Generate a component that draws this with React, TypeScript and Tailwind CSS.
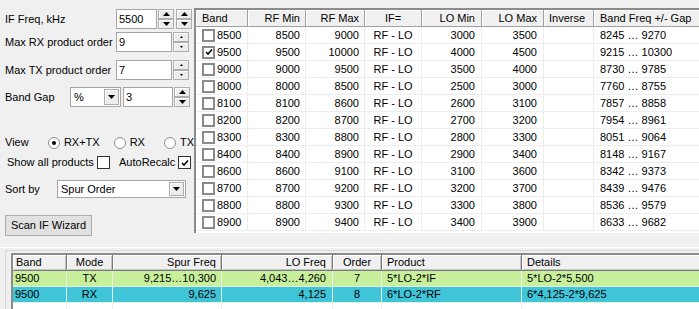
import type { ReactNode } from 'react'

const bands = [
  { band: '8500', min: '8500', max: '9000', lo1: '3000', lo2: '3500', freq: '8245 … 9270', on: false },
  { band: '9500', min: '9500', max: '10000', lo1: '4000', lo2: '4500', freq: '9215 … 10300', on: true },
  { band: '9000', min: '9000', max: '9500', lo1: '3500', lo2: '4000', freq: '8730 … 9785', on: false },
  { band: '8000', min: '8000', max: '8500', lo1: '2500', lo2: '3000', freq: '7760 … 8755', on: false },
  { band: '8100', min: '8100', max: '8600', lo1: '2600', lo2: '3100', freq: '7857 … 8858', on: false },
  { band: '8200', min: '8200', max: '8700', lo1: '2700', lo2: '3200', freq: '7954 … 8961', on: false },
  { band: '8300', min: '8300', max: '8800', lo1: '2800', lo2: '3300', freq: '8051 … 9064', on: false },
  { band: '8400', min: '8400', max: '8900', lo1: '2900', lo2: '3400', freq: '8148 … 9167', on: false },
  { band: '8600', min: '8600', max: '9100', lo1: '3100', lo2: '3600', freq: '8342 … 9373', on: false },
  { band: '8700', min: '8700', max: '9200', lo1: '3200', lo2: '3700', freq: '8439 … 9476', on: false },
  { band: '8800', min: '8800', max: '9300', lo1: '3300', lo2: '3800', freq: '8536 … 9579', on: false },
  { band: '8900', min: '8900', max: '9400', lo1: '3400', lo2: '3900', freq: '8633 … 9682', on: false },
]

const spurs = [
  { band: '9500', mode: 'TX', spur: '9,215…10,300', lo: '4,043…4,260', order: '7', product: '5*LO-2*IF', details: '5*LO-2*5,500', bg: 'bg-[#c8f09c]' },
  { band: '9500', mode: 'RX', spur: '9,625', lo: '4,125', order: '8', product: '6*LO-2*RF', details: '6*4,125-2*9,625', bg: 'bg-[#40c4d8]' },
]

function Arrow({ dir, size }: { dir: 'up' | 'down'; size: 'sm' | 'lg' }) {
  const w = size === 'lg' ? 7 : 3
  const h = size === 'lg' ? 4 : 2
  const pts = dir === 'up' ? `0,${h} ${w / 2},0 ${w},${h}` : `0,0 ${w / 2},${h} ${w},0`
  return (
    <svg width={w} height={h} viewBox={`0 0 ${w} ${h}`} className="block">
      <polygon points={pts} fill="#000" />
    </svg>
  )
}

function SpinBtn({ dir, size }: { dir: 'up' | 'down'; size: 'sm' | 'lg' }) {
  return (
    <div className="flex flex-1 items-center justify-center border border-[#adadad] bg-[#ececec] shadow-[inset_1px_1px_0_#fff]">
      <Arrow dir={dir} size={size} />
    </div>
  )
}

function Spin({ size = 'sm' }: { size?: 'sm' | 'lg' }) {
  return (
    <div className="flex h-full w-[16px] flex-col">
      <SpinBtn dir="up" size={size} />
      <SpinBtn dir="down" size={size} />
    </div>
  )
}

function Edit({ value, w }: { value: string; w: string }) {
  return (
    <div className={`flex h-full items-center border border-[#a5a5a5] bg-white pl-[2px] ${w}`}>{value}</div>
  )
}

function Combo({ value, w }: { value: string; w: string }) {
  return (
    <div className={`flex h-full items-center border border-[#a5a5a5] bg-white pl-[3px] ${w}`}>
      <span className="flex-1">{value}</span>
      <div className="mr-[1px] flex h-[calc(100%-2px)] w-[15px] items-center justify-center border border-[#adadad] bg-[#ececec] shadow-[inset_1px_1px_0_#fff]">
        <Arrow dir="down" size="lg" />
      </div>
    </div>
  )
}

function Box({ checked, grid }: { checked: boolean; grid?: boolean }) {
  return (
    <div
      className={`flex h-[13px] w-[13px] shrink-0 items-center justify-center bg-white ${
        grid ? 'border-2 border-[#8a8a8a]' : 'border border-[#333]'
      }`}
    >
      {checked ? (
        <svg width="8" height="8" viewBox="0 0 8 8">
          <path d="M1 4 L3 6 L7 1.5" stroke="#000" strokeWidth="1.6" fill="none" />
        </svg>
      ) : null}
    </div>
  )
}

function Radio({ on, label }: { on: boolean; label: string }) {
  return (
    <div className="flex items-center gap-[4px]">
      <div className="flex h-[12px] w-[12px] items-center justify-center rounded-full border border-[#8f8f8f] bg-white">
        {on ? <div className="h-[4px] w-[4px] rounded-full bg-black" /> : null}
      </div>
      <span>{label}</span>
    </div>
  )
}

function LeftPanel() {
  return (
    <div className="flex w-[194px] shrink-0 flex-col pl-[5px] pt-[9px]">
      <div className="flex h-[20px] items-center">
        <span className="w-[111px]">IF Freq, kHz</span>
        <Edit value="5500" w="w-[41px]" />
        <div className="ml-[1px] flex h-full gap-[2px]">
          <Spin size="lg" />
          <Spin size="lg" />
        </div>
      </div>
      <div className="mt-[3px] flex h-[20px] items-center">
        <span className="w-[111px]">Max RX product order</span>
        <Edit value="9" w="w-[56px]" />
        <div className="ml-[1px] h-full">
          <Spin />
        </div>
      </div>
      <div className="mt-[8px] flex h-[20px] items-center">
        <span className="w-[111px]">Max TX product order</span>
        <Edit value="7" w="w-[56px]" />
        <div className="ml-[1px] h-full">
          <Spin />
        </div>
      </div>
      <div className="mt-[7px] flex h-[20px] items-center">
        <span className="w-[65px]">Band Gap</span>
        <Combo value="%" w="w-[51px]" />
        <div className="ml-[2px] flex h-full">
          <Edit value="3" w="w-[50px]" />
        </div>
        <div className="ml-[1px] h-full">
          <Spin size="lg" />
        </div>
      </div>
      <div className="mt-[29px] flex h-[13px] items-center">
        <span className="w-[47px]">View</span>
        <Radio on label="RX+TX" />
        <div className="ml-[14px]">
          <Radio on={false} label="RX" />
        </div>
        <div className="ml-[19px]">
          <Radio on={false} label="TX" />
        </div>
      </div>
      <div className="mt-[7px] flex h-[13px] items-center pl-[2px]">
        <span className="w-[90px]">Show all products</span>
        <Box checked={false} />
        <span className="ml-[9px] w-[59px]">AutoRecalc</span>
        <Box checked />
      </div>
      <div className="mt-[11px] flex h-[18px] items-center">
        <span className="w-[52px]">Sort by</span>
        <Combo value="Spur Order" w="w-[129px]" />
      </div>
      <div className="mt-[17px] flex h-[21px] w-[87px] items-center justify-center border border-[#adadad] bg-[#e1e1e1]">
        Scan IF Wizard
      </div>
    </div>
  )
}

const topCols = [
  { label: 'Band', w: 'w-[52px]', align: 'justify-start pl-[6px]' },
  { label: 'RF Min', w: 'w-[58px]', align: 'justify-end pr-[5px]' },
  { label: 'RF Max', w: 'w-[59px]', align: 'justify-end pr-[5px]' },
  { label: 'IF=', w: 'w-[57px]', align: 'justify-center' },
  { label: 'LO Min', w: 'w-[60px]', align: 'justify-end pr-[6px]' },
  { label: 'LO Max', w: 'w-[62px]', align: 'justify-end pr-[6px]' },
  { label: 'Inverse', w: 'w-[50px]', align: 'justify-start pl-[5px]' },
  { label: 'Band Freq +/- Gap', w: 'w-[110px]', align: 'justify-start pl-[6px]' },
]

function BandGrid() {
  return (
    <div className="mt-[8px] h-[225px] overflow-hidden border-l-2 border-t-2 border-l-[#8c8c8c] border-t-[#8c8c8c] bg-white">
      <div className="flex h-[17px]">
        {topCols.map((c) => (
          <div
            key={c.label}
            className={`flex shrink-0 items-center whitespace-nowrap border-b border-r border-[#a0a0a0] bg-[#f0f0f0] shadow-[inset_1px_1px_0_#fff] ${c.w} ${c.align}`}
          >
            {c.label}
          </div>
        ))}
      </div>
      {bands.map((b) => {
        const cells: ReactNode[] = [
          <>
            <Box checked={b.on} grid />
            <span className="ml-[2px]">{b.band}</span>
          </>,
          b.min,
          b.max,
          'RF - LO',
          b.lo1,
          b.lo2,
          '',
          b.freq,
        ]
        return (
          <div key={b.band} className="flex h-[17px]">
            {cells.map((v, i) => (
              <div
                key={i}
                className={`flex shrink-0 items-center whitespace-nowrap border-b border-r border-[#ededed] ${topCols[i].w} ${
                  i === 0 ? 'pl-[6px]' : topCols[i].align
                }`}
              >
                {v}
              </div>
            ))}
          </div>
        )
      })}
    </div>
  )
}

const bottomCols = [
  { label: 'Band', w: 'w-[54px]', head: 'justify-start pl-[3px]', cell: 'justify-start pl-[2px]' },
  { label: 'Mode', w: 'w-[46px]', head: 'justify-center', cell: 'justify-center' },
  { label: 'Spur Freq', w: 'w-[109px]', head: 'justify-end pr-[5px]', cell: 'justify-end pr-[5px]' },
  { label: 'LO Freq', w: 'w-[111px]', head: 'justify-end pr-[6px]', cell: 'justify-end pr-[6px]' },
  { label: 'Order', w: 'w-[49px]', head: 'justify-center', cell: 'justify-center' },
  { label: 'Product', w: 'w-[140px]', head: 'justify-start pl-[5px]', cell: 'justify-start pl-[5px]' },
  { label: 'Details', w: 'w-[200px]', head: 'justify-start pl-[5px]', cell: 'justify-start pl-[5px]' },
]

function SpurGrid() {
  return (
    <div className="h-[56px] overflow-hidden border-l-2 border-t-2 border-l-[#8c8c8c] border-t-[#8c8c8c] bg-white">
      <div className="flex h-[16px]">
        {bottomCols.map((c) => (
          <div
            key={c.label}
            className={`flex shrink-0 items-center border-b border-r border-[#7a7a7a] bg-[#f0f0f0] shadow-[inset_1px_1px_0_#fff,inset_-1px_-1px_0_#c4c4c4] ${c.w} ${c.head}`}
          >
            {c.label}
          </div>
        ))}
      </div>
      {spurs.map((s) => {
        const vals = [s.band, s.mode, s.spur, s.lo, s.order, s.product, s.details]
        return (
          <div key={s.mode} className={`flex h-[16px] ${s.bg}`}>
            {vals.map((v, i) => (
              <div
                key={i}
                className={`flex shrink-0 items-center whitespace-nowrap border-b border-r border-[#e6f2e0] ${bottomCols[i].w} ${bottomCols[i].cell}`}
              >
                {v}
              </div>
            ))}
          </div>
        )
      })}
      <div className="flex h-[8px]">
        {bottomCols.map((c) => (
          <div key={c.label} className={`shrink-0 border-r border-[#ededed] ${c.w}`} />
        ))}
      </div>
    </div>
  )
}

export default function App() {
  return (
    <div className="h-[309px] w-[699px] overflow-hidden bg-[#f0f0f0] font-['Liberation_Sans',Arial,sans-serif] text-[11px] leading-none text-black">
      <div className="flex h-[240px]">
        <LeftPanel />
        <div className="min-w-0 flex-1">
          <BandGrid />
        </div>
      </div>
      <div className="pt-[7px]">
        <div className="border-t border-white pt-[2px]">
          <div className="ml-[5px] border-l border-t border-[#d9d9d9] pl-[5px] pt-[2px]">
            <SpurGrid />
          </div>
        </div>
      </div>
    </div>
  )
}
